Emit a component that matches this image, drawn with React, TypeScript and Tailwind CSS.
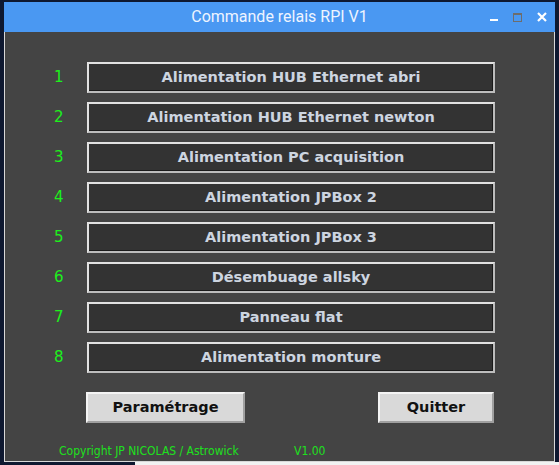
const items = [
  "Alimentation HUB Ethernet abri",
  "Alimentation HUB Ethernet newton",
  "Alimentation PC acquisition",
  "Alimentation JPBox 2",
  "Alimentation JPBox 3",
  "Désembuage allsky",
  "Panneau flat",
  "Alimentation monture",
];

function RelayRow({ n, label }: { n: number; label: string }) {
  return (
    <div className="flex items-center h-[31px]">
      {/* number */}
      <span className="w-[82px] pl-[49px] text-[15px] text-[#1cf01c] font-['DejaVu_Sans',sans-serif]">
        {n}
      </span>
      {/* relay button */}
      <button className="w-[408px] h-[31px] flex items-center justify-center bg-[#333333] border-2 border-t-[#e2e2e2] border-l-[#e2e2e2] border-r-[#bdbdbd] border-b-[#bdbdbd] shadow-[inset_-1px_-1px_0_#1a1a1a] text-[14.5px] font-bold text-[#cdd5e0] font-['DejaVu_Sans',sans-serif]">
        {label}
      </button>
    </div>
  );
}

export default function App() {
  return (
    <div className="w-[559px] h-[465px] bg-[#0e1830] overflow-hidden flex flex-col">
      <div className="ml-[4px] mt-[2px] w-[551px] flex flex-col">
        {/* Title bar */}
        <div className="relative h-[30px] bg-[#4a98f2] flex items-center justify-center">
          <span className="text-[16px] text-[#eef4ff] font-['Roboto',sans-serif]">
            Commande relais RPI V1
          </span>
          <div className="absolute right-[8px] top-0 h-full flex items-center gap-[15px]">
            <div className="w-[8px] h-[8px] flex items-end">
              <div className="w-[8px] h-[2px] bg-white mt-[6px]" />
            </div>
            <div className="w-[9px] h-[9px] border border-[#6d6d6d] border-t-2" />
            <svg width="10" height="10" viewBox="0 0 10 10">
              <path d="M1 1 L9 9 M9 1 L1 9" stroke="#ffffff" strokeWidth="2.2" />
            </svg>
          </div>
        </div>

        {/* Body */}
        <div className="h-[430px] bg-[#444444] border-x border-b border-[#d8d8d8] flex flex-col pt-[30px]">
          <div className="flex flex-col gap-[9px]">
            {items.map((label, i) => (
              <RelayRow key={i} n={i + 1} label={label} />
            ))}
          </div>

          {/* Bottom buttons */}
          <div className="flex justify-between ml-[81px] mr-[60px] mt-[19px]">
            <button className="w-[159px] h-[31px] bg-[#d9d9d9] border-2 border-t-[#f4f4f4] border-l-[#f4f4f4] border-r-[#a0a0a0] border-b-[#a0a0a0] text-[14.5px] font-bold text-[#111] font-['DejaVu_Sans',sans-serif]">
              Paramétrage
            </button>
            <button className="w-[116px] h-[31px] bg-[#d9d9d9] border-2 border-t-[#f4f4f4] border-l-[#f4f4f4] border-r-[#a0a0a0] border-b-[#a0a0a0] text-[14.5px] font-bold text-[#111] font-['DejaVu_Sans',sans-serif]">
              Quitter
            </button>
          </div>

          {/* Footer */}
          <div className="flex mt-[19px] ml-[54px] text-[12px] text-[#1ee01e] font-['DejaVu_Sans_Condensed','DejaVu_Sans',sans-serif]">
            <span className="w-[235px]">Copyright JP NICOLAS / Astrowick</span>
            <span>V1.00</span>
          </div>
        </div>
      </div>
      <div className="flex-1 bg-[#f2f2f2] ml-[135px]" />
    </div>
  );
}
